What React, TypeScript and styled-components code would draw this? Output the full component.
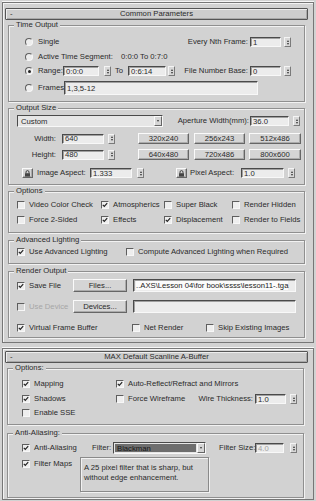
import React from "react";
import styled, { createGlobalStyle } from "styled-components";

const BG = "#d2d2d2";

const Global = createGlobalStyle`
  html, body { margin: 0; padding: 0; background: ${BG}; }
  body { font-family: "Liberation Sans", Arial, sans-serif; font-size: 7.7px; color: #2a2a2a; }
  * { box-sizing: border-box; }
`;

const Page = styled.div`
  width: 316px;
  height: 501px;
  overflow: hidden;
  padding: 2px 0 0 2px;
  background: ${BG};
  display: flex;
  flex-direction: column;
`;

const Rollout = styled.div<{ $h: number; $mt?: number; $pt: number }>`
  width: 312px;
  height: ${(p) => p.$h}px;
  margin-top: ${(p) => p.$mt ?? 0}px;
  padding: ${(p) => p.$pt}px 0 0 2px;
  flex-shrink: 0;
  border: 1px solid #767676;
  box-shadow: inset 1px 1px 0 #f3f3f3, 0 -1px 0 #f6f6f6;
  display: flex;
  flex-direction: column;
`;

const TitleBar = styled.div`
  width: 303px;
  height: 12px;
  flex-shrink: 0;
  display: flex;
  align-items: center;
  border: 1px solid #555;
  border-radius: 1px;
  background: #cdcdcd;
  box-shadow: inset 1px 1px 0 #ededed, inset -1px -1px 0 #a9a9a9;
  line-height: 10px;
`;

const TitleMinus = styled.span`
  width: 14px;
  padding-left: 4px;
`;

const TitleText = styled.span`
  flex: 1;
  text-align: center;
  margin-right: 14px;
`;

const Group = styled.div<{ $h: number; $mt: number; $ml: number; $w: number }>`
  position: relative;
  flex-shrink: 0;
  width: ${(p) => p.$w}px;
  height: ${(p) => p.$h}px;
  margin-top: ${(p) => p.$mt}px;
  margin-left: ${(p) => p.$ml}px;
  border: 1px solid #8f8f8f;
  box-shadow: inset 1px 1px 0 #f2f2f2, 1px 1px 0 #f2f2f2;
  display: flex;
  flex-direction: column;
`;

const GroupLabel = styled.span`
  position: absolute;
  top: -6px;
  left: 5px;
  padding: 0 2px;
  background: ${BG};
  line-height: 10px;
  white-space: nowrap;
`;

const Row = styled.div<{ $h: number; $mt: number; $top?: boolean }>`
  display: flex;
  align-items: ${(p) => (p.$top ? "flex-start" : "center")};
  height: ${(p) => p.$h}px;
  margin-top: ${(p) => p.$mt}px;
  flex-shrink: 0;
`;

const Cluster = styled.div<{ $mr: number }>`
  display: flex;
  align-items: center;
  margin-left: auto;
  margin-right: ${(p) => p.$mr}px;
`;

const Txt = styled.span<{ $w?: number; $ml?: number; $right?: boolean }>`
  white-space: nowrap;
  flex-shrink: 0;
  width: ${(p) => (p.$w ? `${p.$w}px` : "auto")};
  margin-left: ${(p) => p.$ml ?? 0}px;
  text-align: ${(p) => (p.$right ? "right" : "left")};
  line-height: 10px;
`;

const Field = styled.div<{ $w: number; $h?: number; $ml?: number; $dim?: boolean }>`
  width: ${(p) => p.$w}px;
  height: ${(p) => p.$h ?? 10}px;
  margin-left: ${(p) => p.$ml ?? 0}px;
  flex-shrink: 0;
  background: #ececec;
  border-style: solid;
  border-width: 1px;
  border-color: #4a4a4a #f8f8f8 #f8f8f8 #4a4a4a;
  box-shadow: inset 1px 1px 0 #a0a0a0;
  padding-left: 2px;
  display: flex;
  align-items: center;
  overflow: hidden;
  white-space: nowrap;
  line-height: 9px;
  color: ${(p) => (p.$dim ? "#a3a3a3" : "#2a2a2a")};
`;

const Selected = styled.span`
  background: #fbfbfb;
  color: #222;
`;

const Spin = styled.div<{ $ml?: number }>`
  width: 7px;
  height: 10px;
  margin-left: ${(p) => p.$ml ?? 0}px;
  flex-shrink: 0;
  border: 1px solid;
  border-color: #f4f4f4 #7a7a7a #7a7a7a #f4f4f4;
  background: #d8d8d8;
  display: flex;
  flex-direction: column;
  align-items: center;
  justify-content: center;
  gap: 1px;
`;

const Arrow = styled.span<{ $up?: boolean }>`
  width: 0;
  height: 0;
  border-left: 1.5px solid transparent;
  border-right: 1.5px solid transparent;
  ${(p) => (p.$up ? "border-bottom: 2px solid #333;" : "border-top: 2px solid #333;")}
`;

const Btn = styled.button<{ $w: number; $h: number; $ml?: number }>`
  width: ${(p) => p.$w}px;
  height: ${(p) => p.$h}px;
  margin: 0 0 0 ${(p) => p.$ml ?? 0}px;
  padding: 0;
  flex-shrink: 0;
  font: inherit;
  color: #2a2a2a;
  display: flex;
  align-items: center;
  justify-content: center;
  background: #d5d5d5;
  border: 1px solid;
  border-color: #fafafa #666 #666 #fafafa;
  box-shadow: inset -1px -1px 0 #ababab;
  line-height: 9px;
`;

const LockBtn = styled(Btn)``;

const Select = styled.div<{ $w: number; $h: number; $ml?: number }>`
  width: ${(p) => p.$w}px;
  height: ${(p) => p.$h}px;
  margin-left: ${(p) => p.$ml ?? 0}px;
  flex-shrink: 0;
  display: flex;
  align-items: stretch;
  border: 1px solid;
  border-color: #4a4a4a #f8f8f8 #f8f8f8 #4a4a4a;
  background: #e6e6e6;
`;

const SelectText = styled.span<{ $dark?: boolean }>`
  flex: 1;
  display: flex;
  align-items: center;
  padding-left: 2px;
  margin: 1px;
  line-height: 9px;
  background: ${(p) => (p.$dark ? "#6e6e6e" : "transparent")};
  color: ${(p) => (p.$dark ? "#151515" : "#2a2a2a")};
`;

const SelectBtn = styled.span`
  width: 8px;
  flex-shrink: 0;
  display: flex;
  align-items: center;
  justify-content: center;
  background: #d5d5d5;
  border: 1px solid;
  border-color: #fafafa #666 #666 #fafafa;
`;

const CheckItem = styled.label<{ $w?: number; $ml?: number; $h?: number; $dim?: boolean }>`
  display: flex;
  align-items: center;
  gap: 4px;
  width: ${(p) => (p.$w ? `${p.$w}px` : "auto")};
  height: ${(p) => (p.$h ? `${p.$h}px` : "auto")};
  margin-left: ${(p) => p.$ml ?? 0}px;
  flex-shrink: 0;
  white-space: nowrap;
  line-height: 10px;
  color: ${(p) => (p.$dim ? "#a6a6a6" : "#2a2a2a")};
`;

const Box = styled.span<{ $dim?: boolean }>`
  width: 8px;
  height: 8px;
  flex-shrink: 0;
  display: flex;
  align-items: center;
  justify-content: center;
  border: 1px solid;
  border-color: #5e5e5e #f7f7f7 #f7f7f7 #5e5e5e;
  background: ${(p) => (p.$dim ? "#d6d6d6" : "#eeeeee")};
`;

const RadioRing = styled.span<{ $ml?: number }>`
  width: 8px;
  height: 8px;
  margin-left: ${(p) => p.$ml ?? 0}px;
  flex-shrink: 0;
  border-radius: 50%;
  border: 1px solid;
  border-color: #5e5e5e #f7f7f7 #f7f7f7 #5e5e5e;
  background: #ededed;
  display: flex;
  align-items: center;
  justify-content: center;
`;

const Dot = styled.span`
  width: 3px;
  height: 3px;
  border-radius: 50%;
  background: #222;
`;

const Desc = styled.div<{ $w: number; $h: number }>`
  width: ${(p) => p.$w}px;
  height: ${(p) => p.$h}px;
  flex-shrink: 0;
  border: 1px solid #8a8a8a;
  box-shadow: inset 1px 1px 0 #f2f2f2, 1px 1px 0 #f2f2f2;
  padding: 5px 0 0 3px;
  line-height: 10px;
  white-space: nowrap;
`;

const Check = ({ on, dim }: { on?: boolean; dim?: boolean }) => (
  <Box $dim={dim}>
    {on && (
      <svg width="6" height="6" viewBox="0 0 6 6">
        <path d="M0.8 2.8 L2.3 4.4 L5.2 1.2" fill="none" stroke="#222" strokeWidth="1.2" />
      </svg>
    )}
  </Box>
);

const CB = ({
  label,
  on,
  w,
  ml,
  h,
  dim,
}: {
  label: string;
  on?: boolean;
  w?: number;
  ml?: number;
  h?: number;
  dim?: boolean;
}) => (
  <CheckItem $w={w} $ml={ml} $h={h} $dim={dim}>
    <Check on={on} dim={dim} />
    {label}
  </CheckItem>
);

const Radio = ({ on }: { on?: boolean }) => (
  <RadioRing $ml={16}>{on && <Dot />}</RadioRing>
);

const Spinner = ({ ml }: { ml?: number }) => (
  <Spin $ml={ml}>
    <Arrow $up />
    <Arrow />
  </Spin>
);

const Lock = ({ ml }: { ml: number }) => (
  <LockBtn $w={11} $h={10} $ml={ml}>
    <svg width="7" height="7" viewBox="0 0 7 7">
      <path d="M2 3.2V2.1a1.5 1.5 0 0 1 3 0v1.1" fill="none" stroke="#333" strokeWidth="0.9" />
      <rect x="1" y="3.2" width="5" height="3.4" fill="#444" />
    </svg>
  </LockBtn>
);

const Dropdown = ({ text, w, h, ml, dark }: { text: string; w: number; h: number; ml?: number; dark?: boolean }) => (
  <Select $w={w} $h={h} $ml={ml}>
    <SelectText $dark={dark}>{text}</SelectText>
    <SelectBtn>
      <Arrow />
    </SelectBtn>
  </Select>
);

export default function App() {
  return (
    <>
      <Global />
      <Page>
        <Rollout $h={341} $pt={5}>
          <TitleBar>
            <TitleMinus>-</TitleMinus>
            <TitleText>Common Parameters</TitleText>
          </TitleBar>

          <Group $w={297} $h={77} $mt={5} $ml={3}>
            <GroupLabel>Time Output</GroupLabel>
            <Row $h={14} $mt={9}>
              <Radio />
              <Txt $ml={5}>Single</Txt>
              <Cluster $mr={13}>
                <Txt>Every Nth Frame:</Txt>
                <Field $w={31} $ml={2}>1</Field>
                <Spinner ml={3} />
              </Cluster>
            </Row>
            <Row $h={14} $mt={1}>
              <Radio />
              <Txt $ml={5} $w={83}>
                Active Time Segment:
              </Txt>
              <Txt>0:0:0 To 0:7:0</Txt>
            </Row>
            <Row $h={14} $mt={0}>
              <Radio on />
              <Txt $ml={5} $w={25}>
                Range:
              </Txt>
              <Field $w={36}>0:0:0</Field>
              <Spinner ml={5} />
              <Txt $ml={4} $w={13}>
                To
              </Txt>
              <Field $w={38}>0:6:14</Field>
              <Spinner ml={2} />
              <Cluster $mr={13}>
                <Txt>File Number Base:</Txt>
                <Field $w={31} $ml={2}>0</Field>
                <Spinner ml={3} />
              </Cluster>
            </Row>
            <Row $h={16} $mt={2}>
              <Radio />
              <Txt $ml={5} $w={26}>
                Frames
              </Txt>
              <Field $w={194} $h={14}>
                1,3,5-12
              </Field>
            </Row>
          </Group>

          <Group $w={297} $h={77} $mt={6} $ml={3}>
            <GroupLabel>Output Size</GroupLabel>
            <Row $h={12} $mt={6}>
              <Dropdown text="Custom" w={146} h={12} ml={8} />
              <Cluster $mr={4}>
                <Txt>Aperture Width(mm):</Txt>
                <Field $w={39} $ml={1}>36.0</Field>
                <Spinner ml={4} />
              </Cluster>
            </Row>
            <Row $h={11} $mt={6}>
              <Txt $w={47} $right>
                Width:
              </Txt>
              <Field $w={42} $ml={6}>640</Field>
              <Spinner ml={4} />
              <Btn $w={51} $h={11} $ml={23}>320x240</Btn>
              <Btn $w={51} $h={11} $ml={5}>256x243</Btn>
              <Btn $w={52} $h={11} $ml={4}>512x486</Btn>
            </Row>
            <Row $h={11} $mt={5}>
              <Txt $w={47} $right>
                Height:
              </Txt>
              <Field $w={42} $ml={6}>480</Field>
              <Spinner ml={4} />
              <Btn $w={51} $h={11} $ml={23}>640x480</Btn>
              <Btn $w={51} $h={11} $ml={5}>720x486</Btn>
              <Btn $w={52} $h={11} $ml={4}>800x600</Btn>
            </Row>
            <Row $h={10} $mt={8}>
              <Lock ml={13} />
              <Txt $ml={4} $w={53}>
                Image Aspect:
              </Txt>
              <Field $w={42}>1.333</Field>
              <Spinner ml={5} />
              <Lock ml={32} />
              <Txt $ml={3} $w={51}>
                Pixel Aspect:
              </Txt>
              <Field $w={43}>1.0</Field>
              <Spinner ml={4} />
            </Row>
          </Group>

          <Group $w={297} $h={42} $mt={6} $ml={3}>
            <GroupLabel>Options</GroupLabel>
            <Row $h={12} $mt={7}>
              <CB label="Video Color Check" w={84} ml={8} />
              <CB label="Atmospherics" on w={63} />
              <CB label="Super Black" w={68} />
              <CB label="Render Hidden" />
            </Row>
            <Row $h={12} $mt={3}>
              <CB label="Force 2-Sided" w={84} ml={8} />
              <CB label="Effects" on w={63} />
              <CB label="Displacement" on w={68} />
              <CB label="Render to Fields" />
            </Row>
          </Group>

          <Group $w={297} $h={24} $mt={7} $ml={3}>
            <GroupLabel>Advanced Lighting</GroupLabel>
            <Row $h={12} $mt={5}>
              <CB label="Use Advanced Lighting" on w={109} ml={8} />
              <CB label="Compute Advanced Lighting when Required" />
            </Row>
          </Group>

          <Group $w={297} $h={67} $mt={7} $ml={3}>
            <GroupLabel>Render Output</GroupLabel>
            <Row $h={13} $mt={7}>
              <CB label="Save File" on w={56} ml={8} />
              <Btn $w={54} $h={13}>Files...</Btn>
              <Field $w={163} $h={13} $ml={6}>
                <Selected>..AXS\Lesson 04\for book\ssss\lesson11-.tga</Selected>
              </Field>
            </Row>
            <Row $h={13} $mt={8}>
              <CB label="Use Device" dim w={56} ml={8} />
              <Btn $w={54} $h={13}>Devices...</Btn>
              <Field $w={163} $h={13} $ml={6} />
            </Row>
            <Row $h={12} $mt={9}>
              <CB label="Virtual Frame Buffer" on w={115} ml={8} />
              <CB label="Net Render" w={74} />
              <CB label="Skip Existing Images" />
            </Row>
          </Group>
        </Rollout>

        <Rollout $h={152} $mt={5} $pt={2}>
          <TitleBar>
            <TitleMinus>-</TitleMinus>
            <TitleText>MAX Default Scanline A-Buffer</TitleText>
          </TitleBar>

          <Group $w={297} $h={57} $mt={5} $ml={2}>
            <GroupLabel>Options:</GroupLabel>
            <Row $h={12} $mt={9}>
              <CB label="Mapping" on w={94} ml={14} />
              <CB label="Auto-Reflect/Refract and Mirrors" on />
            </Row>
            <Row $h={12} $mt={3}>
              <CB label="Shadows" on w={94} ml={14} />
              <CB label="Force Wireframe" />
              <Cluster $mr={6}>
                <Txt>Wire Thickness:</Txt>
                <Field $w={31} $ml={2}>1.0</Field>
                <Spinner ml={4} />
              </Cluster>
            </Row>
            <Row $h={12} $mt={2}>
              <CB label="Enable SSE" ml={14} />
            </Row>
          </Group>

          <Group $w={297} $h={65} $mt={8} $ml={2}>
            <GroupLabel>Anti-Aliasing:</GroupLabel>
            <Row $h={12} $mt={8}>
              <CB label="Anti-Aliasing" on w={70} ml={14} />
              <Txt $w={21}>Filter:</Txt>
              <Dropdown text="Blackman" w={93} h={12} dark />
              <Txt $ml={13} $w={36}>
                Filter Size:
              </Txt>
              <Field $w={29} $dim>
                4.0
              </Field>
              <Spinner ml={6} />
            </Row>
            <Row $h={35} $mt={3} $top>
              <CB label="Filter Maps" on w={58} ml={14} h={14} />
              <Desc $w={129} $h={35}>
                A 25 pixel filter that is sharp, but
                <br />
                without edge enhancement.
              </Desc>
            </Row>
          </Group>
        </Rollout>
      </Page>
    </>
  );
}
